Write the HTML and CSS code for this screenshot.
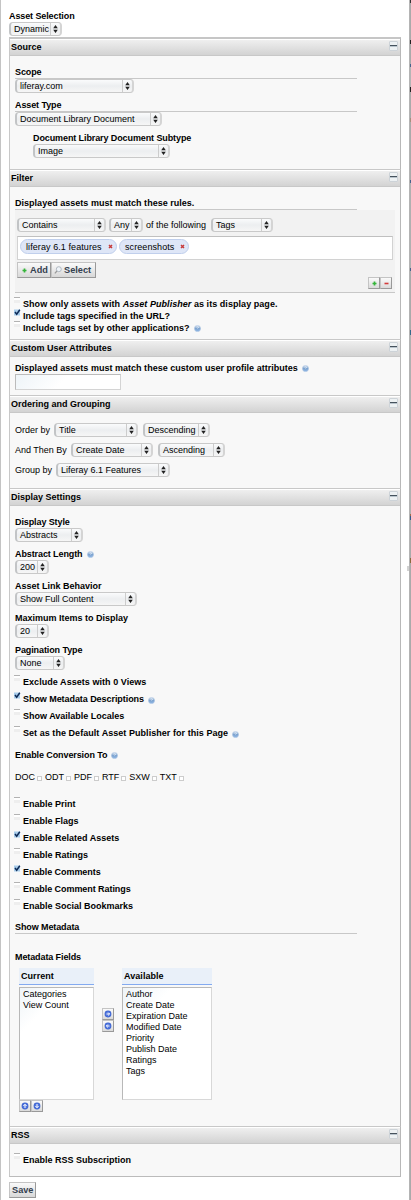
FILE: index.html
```html
<!DOCTYPE html>
<html lang="en">
<head>
<meta charset="utf-8">
<title>Asset Publisher Configuration</title>
<link rel="stylesheet" href="styles.css">
</head>
<body>
<svg class="defs" width="0" height="0">
  <defs>
    <linearGradient id="helpFill" x1="0" y1="0" x2="0" y2="1"><stop offset="0" stop-color="#d3e0ef"/><stop offset=".5" stop-color="#7ea4d0"/><stop offset="1" stop-color="#8db6e6"/></linearGradient>
    <symbol id="arrows" viewBox="0 0 5 8"><path d="M2.5 0 4.8 3.3H.2ZM2.5 8 .2 4.7H4.8Z" fill="#222"/></symbol>
    <symbol id="help" viewBox="0 0 7 7"><circle cx="3.5" cy="3.5" r="3.1" fill="url(#helpFill)" stroke="#b4cae4" stroke-width=".6"/><path d="M2.5 2.2Q3.5 1.4 4.5 2.2 4.4 3 3.5 3.5" fill="none" stroke="#e6eef8" stroke-width=".8"/></symbol>
    <symbol id="plus" viewBox="0 0 5 5"><path d="M2.5.5V4.5M.5 2.5H4.5" stroke="#35b53a" stroke-width="1.7"/></symbol>
    <symbol id="minus" viewBox="0 0 5 5"><path d="M.5 2.5H4.5" stroke="#d33a3a" stroke-width="1.6"/></symbol>
    <symbol id="tick" viewBox="0 0 7 7"><rect width="6" height="6" y=".5" fill="#a9cdeb"/><path d="M1 3 2.7 5.2 5.8.8" fill="none" stroke="#0d2b57" stroke-width="1.5"/></symbol>
    <symbol id="ball" viewBox="0 0 8 8"><circle cx="4" cy="4" r="3.4" fill="#3c63cf"/><circle cx="4" cy="4" r="2.7" fill="#5075dc"/></symbol>
  </defs>
</svg>
<div class="page">
<main class="dialog">
  <div class="label">Asset Selection</div>
  <div class="select w53"><span>Dynamic</span><i><svg><use href="#arrows"/></svg></i></div>

  <section class="panel source">
    <header><h2>Source</h2><b class="toggle"></b></header>
    <div class="label ruled">Scope</div>
    <div class="select w119"><span>liferay.com</span><i><svg><use href="#arrows"/></svg></i></div>
    <div class="label ruled gap6">Asset Type</div>
    <div class="select w147"><span>Document Library Document</span><i><svg><use href="#arrows"/></svg></i></div>
    <div class="nested">
      <div class="label">Document Library Document Subtype</div>
      <div class="select w137"><span>Image</span><i><svg><use href="#arrows"/></svg></i></div>
    </div>
  </section>

  <section class="panel filter">
    <header><h2>Filter</h2><b class="toggle"></b></header>
    <div class="label ruled"><span class="long">Displayed assets must match these rules.</span></div>
    <div class="rule">
      <div class="row">
        <div class="select w89"><span>Contains</span><i><svg><use href="#arrows"/></svg></i></div>
        <div class="select w34 any"><span>Any</span><i><svg><use href="#arrows"/></svg></i></div>
        <span class="text following">of the following</span>
        <div class="select w62"><span>Tags</span><i><svg><use href="#arrows"/></svg></i></div>
      </div>
      <div class="tagbox">
        <span class="tag first">liferay 6.1 features<svg class="x" viewBox="0 0 5 5"><path d="M1 1 4 4M4 1 1 4"/></svg></span>
        <span class="tag second">screenshots<svg class="x" viewBox="0 0 5 5"><path d="M1 1 4 4M4 1 1 4"/></svg></span>
      </div>
      <div class="buttons">
        <span class="button add"><svg class="i5"><use href="#plus"/></svg>Add</span>
        <span class="button pick"><svg class="i8" viewBox="0 0 8 8"><circle cx="4.8" cy="3.2" r="2.5" fill="#eef3f8" stroke="#aab3bd" stroke-width=".9"/><path d="M3 5 .8 7.4" stroke="#999" stroke-width="1.2"/></svg>Select</span>
      </div>
      <div class="row-tools">
        <span class="mini"><svg class="i5"><use href="#plus"/></svg></span><span class="mini"><svg class="i5"><use href="#minus"/></svg></span>
      </div>
    </div>
    <div class="check tight start"><b class="box"></b><span class="wide">Show only assets with <em>Asset Publisher</em> as its display page.</span></div>
    <div class="check tight"><svg class="tick"><use href="#tick"/></svg><span>Include tags specified in the URL?</span></div>
    <div class="check tight"><b class="box"></b><span>Include tags set by other applications?</span><svg class="help"><use href="#help"/></svg></div>
  </section>

  <section class="panel custom">
    <header><h2>Custom User Attributes</h2><b class="toggle"></b></header>
    <div class="label"><span class="long">Displayed assets must match these custom user profile attributes</span><svg class="help"><use href="#help"/></svg></div>
    <div class="input"></div>
  </section>

  <section class="panel ordering">
    <header><h2>Ordering and Grouping</h2><b class="toggle"></b></header>
    <div class="row"><span class="text t39">Order by</span><div class="select w84"><span>Title</span><i><svg><use href="#arrows"/></svg></i></div><div class="select w67 next"><span>Descending</span><i><svg><use href="#arrows"/></svg></i></div></div>
    <div class="row"><span class="text t56">And Then By</span><div class="select w82"><span>Create Date</span><i><svg><use href="#arrows"/></svg></i></div><div class="select w67 next"><span>Ascending</span><i><svg><use href="#arrows"/></svg></i></div></div>
    <div class="row"><span class="text t41">Group by</span><div class="select w114"><span>Liferay 6.1 Features</span><i><svg><use href="#arrows"/></svg></i></div></div>
  </section>

  <section class="panel display">
    <header><h2>Display Settings</h2><b class="toggle"></b></header>
    <div class="field"><div class="label">Display Style</div><div class="select w68"><span>Abstracts</span><i><svg><use href="#arrows"/></svg></i></div></div>
    <div class="field"><div class="label"><span>Abstract Length</span><svg class="help"><use href="#help"/></svg></div><div class="select w34"><span>200</span><i><svg><use href="#arrows"/></svg></i></div></div>
    <div class="field"><div class="label behavior">Asset Link Behavior</div><div class="select w122"><span>Show Full Content</span><i><svg><use href="#arrows"/></svg></i></div></div>
    <div class="field"><div class="label behavior">Maximum Items to Display</div><div class="select w34"><span>20</span><i><svg><use href="#arrows"/></svg></i></div></div>
    <div class="field"><div class="label">Pagination Type</div><div class="select w50"><span>None</span><i><svg><use href="#arrows"/></svg></i></div></div>
    <div class="check"><b class="box"></b><span class="wide">Exclude Assets with 0 Views</span></div>
    <div class="check"><svg class="tick"><use href="#tick"/></svg><span class="narrow">Show Metadata Descriptions</span><svg class="help"><use href="#help"/></svg></div>
    <div class="check"><b class="box"></b><span>Show Available Locales</span></div>
    <div class="check"><b class="box"></b><span class="wide">Set as the Default Asset Publisher for this Page</span><svg class="help"><use href="#help"/></svg></div>
    <div class="label conversion"><span>Enable Conversion To</span><svg class="help"><use href="#help"/></svg></div>
    <div class="formats"><span>DOC<b></b></span><span>ODT<b></b></span><span>PDF<b></b></span><span>RTF<b></b></span><span>SXW<b></b></span><span>TXT<b></b></span></div>
    <div class="check"><b class="box"></b><span>Enable Print</span></div>
    <div class="check"><b class="box"></b><span>Enable Flags</span></div>
    <div class="check"><svg class="tick"><use href="#tick"/></svg><span>Enable Related Assets</span></div>
    <div class="check"><b class="box"></b><span>Enable Ratings</span></div>
    <div class="check"><svg class="tick"><use href="#tick"/></svg><span class="narrow">Enable Comments</span></div>
    <div class="check"><b class="box"></b><span class="narrow">Enable Comment Ratings</span></div>
    <div class="check"><b class="box"></b><span>Enable Social Bookmarks</span></div>
    <div class="label ruled meta">Show Metadata</div>
    <div class="label fields">Metadata Fields</div>
    <div class="mover">
      <div class="current">
        <h3>Current</h3>
        <ul><li>Categories</li><li>View Count</li></ul>
        <div class="pair"><span class="mini"><svg class="i8" viewBox="0 0 8 8"><use href="#ball"/><path d="M4 6V2.3M2.4 4 4 2.3 5.6 4" fill="none" stroke="#fff"/></svg></span><span class="mini"><svg class="i8" viewBox="0 0 8 8"><use href="#ball"/><path d="M4 2V5.7M2.4 4 4 5.7 5.6 4" fill="none" stroke="#fff"/></svg></span></div>
      </div>
      <div class="between"><span class="mini"><svg class="i8" viewBox="0 0 8 8"><use href="#ball"/><path d="M2.5 4H5.5M4.2 2.6 5.6 4 4.2 5.4" fill="none" stroke="#fff"/></svg></span><span class="mini"><svg class="i8" viewBox="0 0 8 8"><use href="#ball"/><path d="M5.5 4H2.5M3.8 2.6 2.4 4 3.8 5.4" fill="none" stroke="#fff"/></svg></span></div>
      <div class="available">
        <h3>Available</h3>
        <ul><li>Author</li><li>Create Date</li><li>Expiration Date</li><li>Modified Date</li><li>Priority</li><li>Publish Date</li><li>Ratings</li><li>Tags</li></ul>
      </div>
    </div>
  </section>

  <section class="panel rss">
    <header><h2>RSS</h2><b class="toggle"></b></header>
    <div class="check"><b class="box"></b><span>Enable RSS Subscription</span></div>
  </section>
  <span class="button save">Save</span>
</main>
<aside class="edge"><b class="grip"></b></aside>
</div>
</body>
</html>
```
FILE: styles.css
```css
* { box-sizing: border-box; }
body { margin: 0; background: #fff; color: #000; font: 9px/12px "Liberation Sans", Arial, sans-serif; }
h2, h3, ul { margin: 0; padding: 0; list-style: none; font-size: 9px; }
svg { display: block; flex: none; overflow: visible; }
.defs { position: absolute; }
.page { display: flex; width: 411px; height: 1200px; overflow: hidden; }
.dialog { width: 409px; border-left: 1px solid #c4c4c4; padding: 10px 8px 0 8px; }
.edge { width: 2px; border-left: 1px solid #b4b4b4; background: linear-gradient(#333 0 3px, #aaa 3px 40px, #222 40px 44px, #aaa 44px 64px, #46628c 64px 67px, #b5b5b5 67px 87px, #222 87px 92px, #aaa 92px 118px, #a58f7c 118px 122px, #aaa 122px 180px, #46628c 180px 183px, #b0b0b0 183px 268px, #46628c 268px 271px, #aaa 271px 330px, #356a8a 330px 335px, #b0b0b0 335px 514px, #a06a4c 514px 516px, #355b8c 516px 520px, #aaa 520px 558px, #8a6a3c 558px 563px, #aaa 563px); }
.grip { display: block; margin: 566px 0 0 -3px; width: 2px; height: 5px; background: #d2d2d2; position: relative; }

.label { height: 12px; line-height: 12px; font-weight: bold; white-space: nowrap; display: flex; letter-spacing: -.1px; }
.long { letter-spacing: .02px; }
.wide { letter-spacing: .05px; }
.narrow { letter-spacing: -.06px; }
.behavior { letter-spacing: 0; }
.ruled { height: 13px; width: 342px; border-bottom: 1px solid #c8c8c8; }
.gap6 { margin-top: 6px; }
.text { white-space: nowrap; line-height: 14px; }
.help { width: 7px; height: 7px; margin: 3px 0 0 4px; }

.select { height: 14px; display: flex; border: 1px solid #c9c9c9; border-left: 2px solid #c2c4c6; border-right: 2px solid #d4d4d4; border-radius: 4px; background: linear-gradient(#fafbfc, #eceef0 50%, #f6f6f6); }
.select span { flex: 1; padding-left: 3px; line-height: 12px; white-space: nowrap; overflow: visible; min-width: 0; }
.select i { width: 10px; border-left: 1px solid #ccc; display: flex; align-items: center; justify-content: center; }
.select i svg { width: 5px; height: 8px; }
.w34 { width: 34px; } .w50 { width: 50px; } .w53 { width: 53px; } .w62 { width: 62px; }
.w67 { width: 67px; } .w68 { width: 68px; } .w82 { width: 82px; } .w84 { width: 84px; }
.w89 { width: 89px; } .w114 { width: 114px; } .w119 { width: 119px; } .w122 { width: 122px; }
.w137 { width: 137px; } .w147 { width: 147px; }

.panel { width: 392px; border: solid #c8c8c8; border-width: 1px 1px 0; border-right-color: #b8b8b8; background: #f8f8f8; padding-left: 5px; }
.panel header { height: 17px; margin: 0 0 10px -5px; padding: 0 2px 0 1px; display: flex; justify-content: space-between; border-bottom: 1px solid #c8c8c8; border-top: 1px solid #fff; background: linear-gradient(#efefef, #d3d3d3); }
h2 { line-height: 15px; }
.toggle { width: 9px; height: 10px; margin-top: 1px; border: 1px solid #cdd3d8; border-radius: 1px; background: linear-gradient(transparent 3px, #46525d 3px, #46525d 4px, #b9c4cc 4px, #b9c4cc 5px, transparent 5px), #edf1f3; }
.source { margin-top: 1px; height: 132px; border-top: 2px solid #c6c6c6; }
.source header { margin-bottom: 10px; }
.nested { padding: 6px 0 0 18px; }

.filter { height: 170px; }
.rule { width: 380px; height: 83px; padding: 8px 2px 0; background: #f2f2f2; border-bottom: 1px solid #c8c8c8; }
.row { display: flex; height: 14px; }
.any { margin-left: 3px; }
.following { width: 68px; padding-left: 3px; }
.tagbox { display: flex; gap: 2px; margin-top: 4px; height: 24px; padding: 2px; border: 1px solid #d2d2d2; border-top-color: #c0c0c0; background: #fff; }
.tag { display: flex; justify-content: space-between; height: 15px; border: 1px solid #c0cfec; border-radius: 8px; background: #dee6f7; line-height: 14px; padding: 0 3px 0 5px; letter-spacing: .08px; white-space: nowrap; }
.x { width: 5px; height: 5px; margin-top: 4px; fill: none; stroke: #c73a3a; stroke-width: 1.5; }
.first { width: 97px; } .second { width: 70px; }
.buttons { display: flex; margin-top: 2px; }
.button { display: flex; align-items: center; height: 16px; border: 1px solid #c4c4c4; border-right-color: #999; border-bottom-color: #999; background: linear-gradient(#fafafa, #d8d8d8); font-weight: bold; font-size: 9.2px; color: #34404f; white-space: nowrap; }
.add { width: 34px; padding-left: 4px; gap: 3px; }
.pick { width: 45px; padding-left: 2px; gap: 2px; }
.i5 { width: 5px; height: 5px; } .i8 { width: 8px; height: 8px; }
.row-tools { display: flex; justify-content: flex-end; margin: -1px 1px 0 0; }
.mini { width: 12px; height: 12px; display: flex; align-items: center; justify-content: center; border: 1px solid #c4c4c4; border-right-color: #999; border-bottom-color: #999; background: linear-gradient(#fafafa, #dadada); }

.check { display: flex; height: 17px; margin-left: -1px; font-weight: bold; line-height: 17px; white-space: nowrap; }
.check .help { margin-top: 6px; }
.box { width: 6px; height: 6px; margin: 1px 3px 0 0; border-top: 1px solid #b2b2b2; background: linear-gradient(#fff 2px, #eee 2px); }
.tick { width: 7px; height: 7px; margin: 1px 2px 0 0; }
.tight { height: 12px; line-height: 12px; }
.tight .box, .tight .tick { margin-top: -1px; }
.tight .help { margin-top: 3px; }
.start { margin-top: 5px; }

.custom { height: 56px; }
.custom header { margin-bottom: 5px; }
.input { width: 106px; height: 16px; border: 1px solid #d4d4d4; border-top-color: #bbb; border-left-color: #bbb; background: linear-gradient(135deg, #eef4f8, #fff 45%); }
.ordering { height: 93px; }
.ordering .row { margin-bottom: 6px; }
.t39 { width: 39px; } .t56 { width: 56px; } .t41 { width: 41px; }
.next { margin-left: 5px; }

.display { height: 638px; }
.field { height: 32px; }
.display header + .field { margin-top: 0; }
.display .field + .check { margin-top: -2px; }
.conversion { margin-top: 7px; }
.formats { display: flex; margin: 10px 0 13px; height: 12px; gap: 3px; }
.formats span { display: flex; }
.formats b { width: 5px; height: 5px; margin: 5px 0 0 2px; border: 1px solid #ccc; background: #fff; }
.meta { margin-top: 6px; }
.fields { margin-top: 17px; }
.mover { display: flex; padding: 5px 0 0 4px; }
.current { width: 75px; } .available { width: 90px; }
h3 { height: 17px; padding-left: 2px; line-height: 16px; background: #e9f0f9; border-bottom: 1px solid #83aaf0; letter-spacing: .05px; }
.mover ul { height: 113px; margin-top: 2px; padding: 1px 3px; border: 1px solid #d8d8d8; border-top-color: #b8b8b8; border-left-color: #b8b8b8; background: linear-gradient(135deg, #eef4f8, #fff 25%); }
.mover li { line-height: 11px; white-space: nowrap; }
.pair { display: flex; }
.between { width: 28px; padding: 40px 8px 0; }
.rss { height: 51px; border-bottom: 1px solid #bbb; }
.rss header { margin-bottom: 8px; }
.save { width: 27px; height: 16px; margin-top: 5px; padding-left: 2px; }
```
